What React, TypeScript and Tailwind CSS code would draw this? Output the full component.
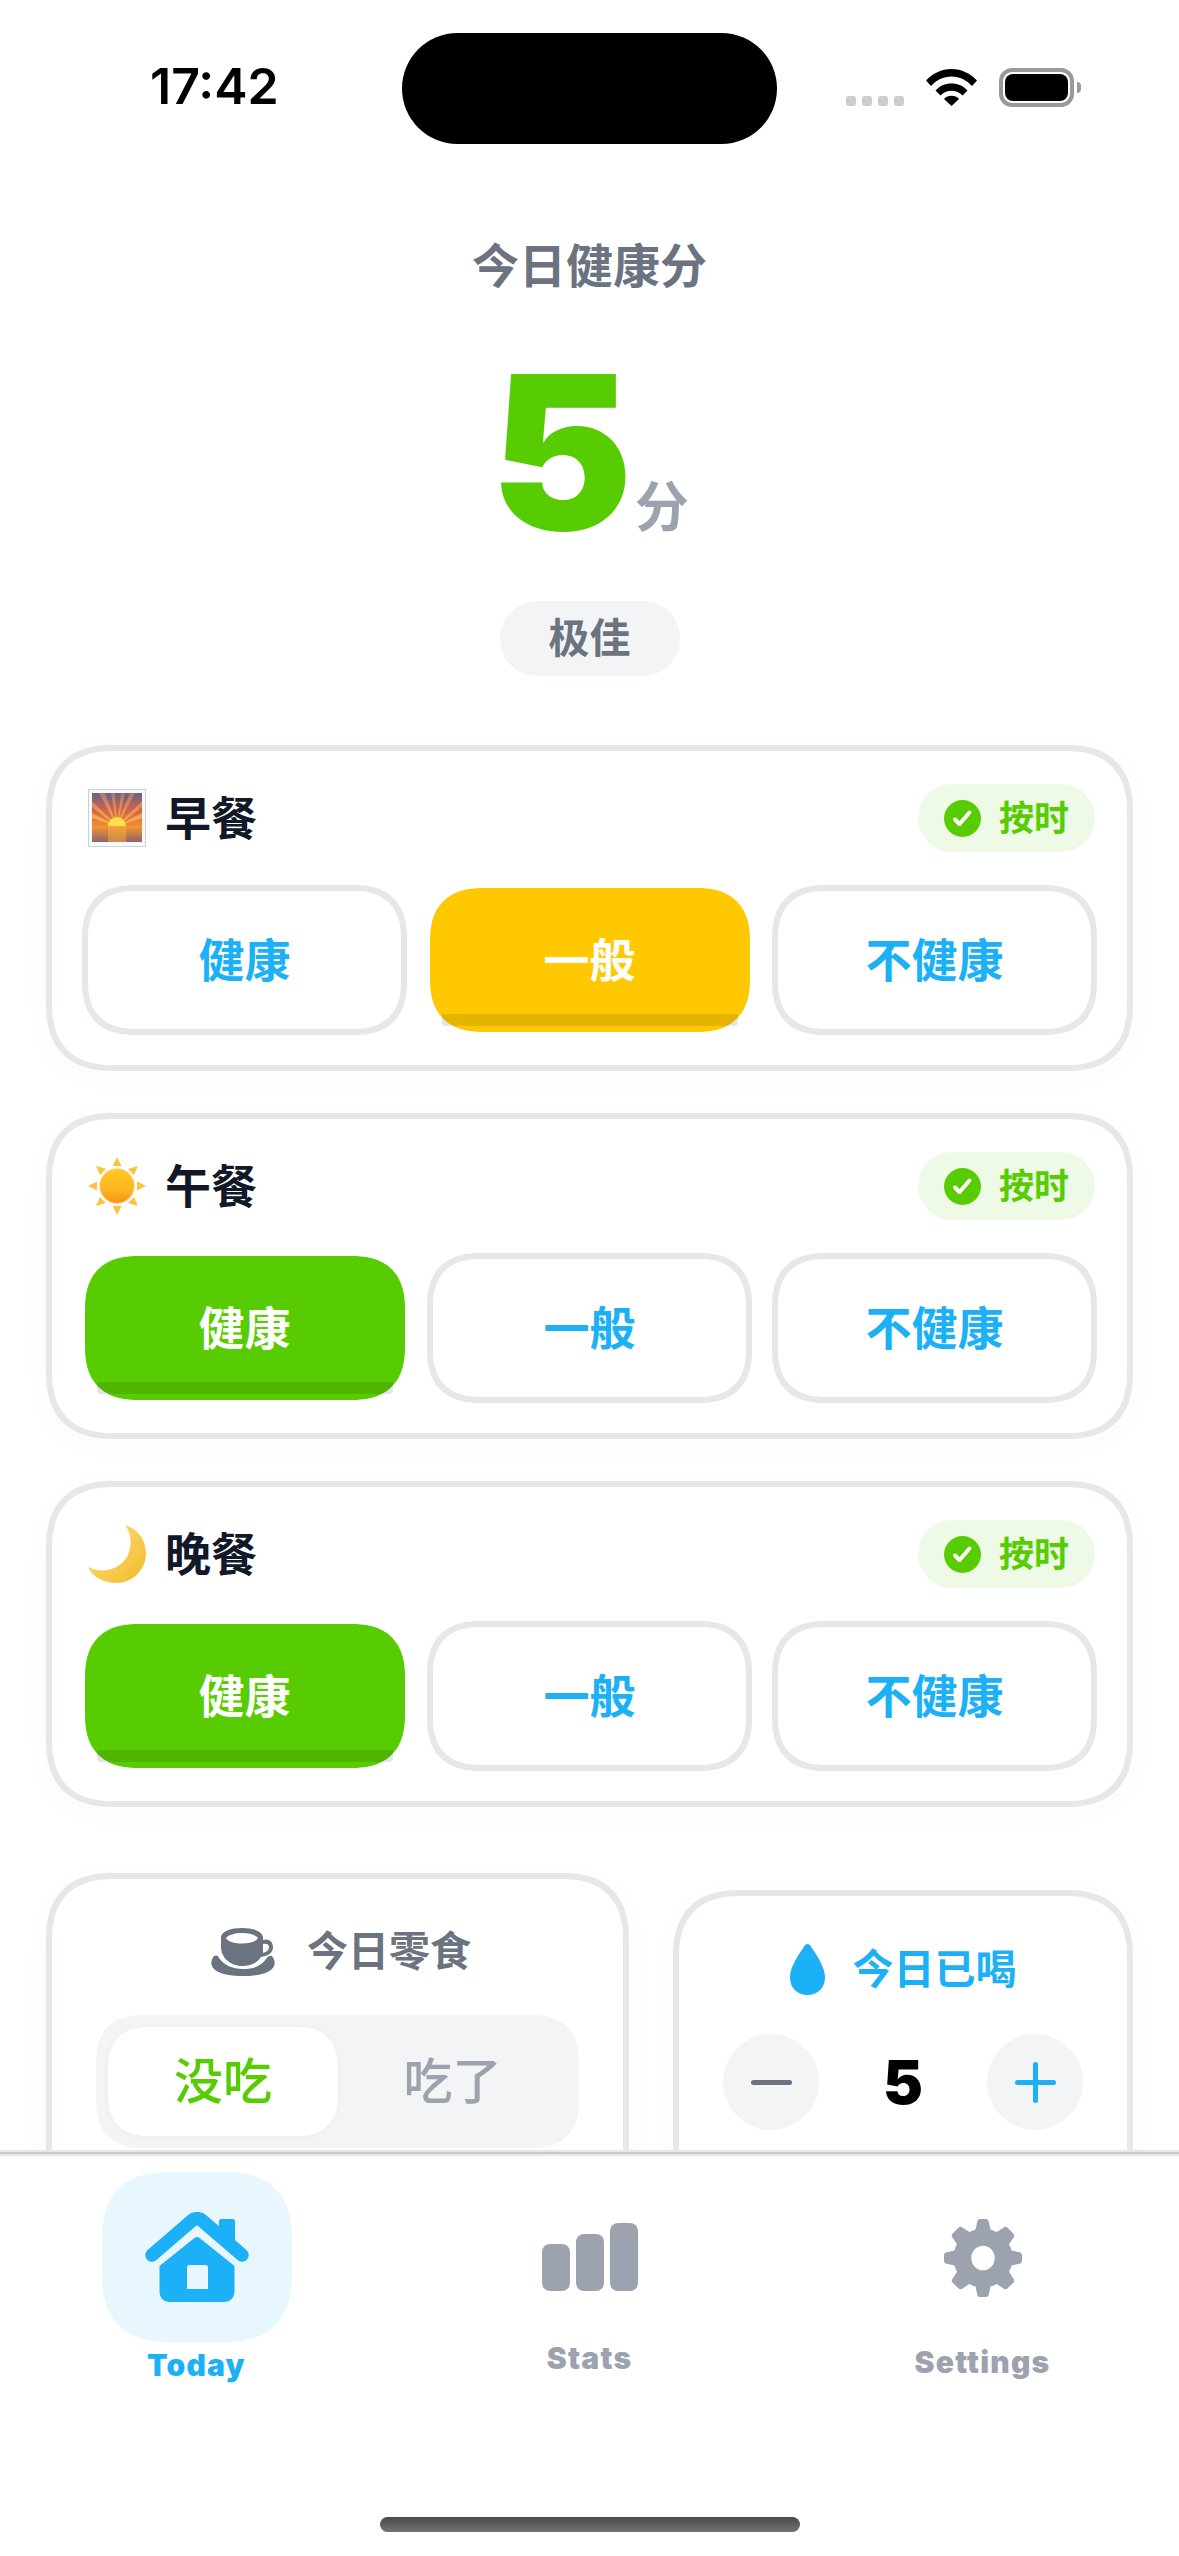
import { ReactNode } from "react";

const cjk = "font-['Inter','Noto_Sans_CJK_SC',sans-serif]";
const squircle = "[corner-shape:superellipse(1.3)]";

const Sunrise = () => (
  <svg width="58" height="58" viewBox="0 0 58 58" className="shrink-0">
    <defs>
      <linearGradient id="sky" x1="0" y1="0" x2="0" y2="1">
        <stop offset="0" stopColor="#67608a" />
        <stop offset="0.45" stopColor="#c9604f" />
        <stop offset="1" stopColor="#f98a2c" />
      </linearGradient>
      <linearGradient id="sea" x1="0" y1="0" x2="0" y2="1">
        <stop offset="0" stopColor="#f39a2e" />
        <stop offset="1" stopColor="#8f6268" />
      </linearGradient>
      <linearGradient id="ray" x1="0" y1="0" x2="0" y2="1">
        <stop offset="0" stopColor="#d08a68" stopOpacity="0.55" />
        <stop offset="1" stopColor="#ffbf55" stopOpacity="0.95" />
      </linearGradient>
    </defs>
    <rect x="0.5" y="0.5" width="57" height="57" fill="#f7fafa" stroke="#c9d3d3" />
    <rect x="4" y="4" width="50" height="33" fill="url(#sky)" />
    <path
      d="M29 37L4 12V18ZM29 37L4 24V29ZM29 37L11 4H17ZM29 37L23 4H27ZM29 37L33 4H37ZM29 37L42 4H47ZM29 37L54 12V18ZM29 37L54 24V29Z"
      fill="url(#ray)"
    />
    <path d="M20 37a9 9 0 0 1 18 0z" fill="#ffe04d" />
    <rect x="4" y="37" width="50" height="16" fill="url(#sea)" />
    <rect x="20" y="37" width="18" height="16" fill="#f7a83a" opacity="0.55" />
  </svg>
);

const Sun = () => (
  <svg width="58" height="58" viewBox="0 0 58 58" className="shrink-0">
    <defs>
      <linearGradient id="sunfill" x1="0" y1="0" x2="0" y2="1">
        <stop offset="0" stopColor="#ffc928" />
        <stop offset="0.6" stopColor="#fdb51e" />
        <stop offset="1" stopColor="#f7941a" />
      </linearGradient>
    </defs>
    <path
      d="M29 0l4.500 9h-9zM29 58l4.500-9h-9zM0 29l9 4.500v-9zM58 29l-9 4.500v-9zM8 9l10 3-6 6zM50 9l-10 3 6 6zM8 49l10-3-6-6zM50 49l-10-3 6-6z"
      fill="#fcc23f"
    />
    <circle cx="29" cy="29" r="18" fill="#fde4b0" />
    <circle cx="29" cy="29" r="17" fill="url(#sunfill)" />
  </svg>
);

const Moon = () => (
  <svg width="58" height="58" viewBox="0 0 58 58" className="shrink-0">
    <defs>
      <linearGradient id="moonfill" x1="0" y1="0" x2="1" y2="1">
        <stop offset="0" stopColor="#ffe27a" />
        <stop offset="1" stopColor="#f2b92e" />
      </linearGradient>
    </defs>
    <path d="M37 0C52 4 61 20 57 36 53 50 40 59 26 58 13 57 3 50 0 42 14 49 31 45 39 32 44 22 44 9 37 0Z" fill="url(#moonfill)" />
  </svg>
);

const Cup = () => (
  <svg width="66" height="50" viewBox="0 0 66 50" className="shrink-0">
    <path d="M4 29C-4 40 6 49 33 49 60 49 70 40 62 29 60 28 58 29 56 32 52 38 45 42 33 42 22 42 14 38 9 31 8 28 6 28 4 29Z" fill="#6b7280" />
    <path fillRule="evenodd" d="M11 11C11 4 21 1 32 1 43 1 53 4 53 11V13C58 11 63 14 63 20 63 26 58 29 51 30 48 35 42 39 32 39 20 39 11 30 11 20ZM16 11C18 8 25 6 32 6 39 6 46 8 48 11 46 15 39 16.500 32 16.500 25 16.500 18 15 16 11ZM53 17V26C57 25 59 23 59 20 59 17 56 16 53 17Z" fill="#6b7280" />
  </svg>
);

const Drop = () => (
  <svg width="35" height="51" viewBox="0 0 35 51" className="shrink-0">
    <path d="M17.500 0C15.600 0 14.800 1.400 13.800 3 8.500 11 0 22.500 0 33.500 0 44 7.500 51 17.500 51 27.500 51 35 44 35 33.500 35 22.500 26.500 11 21.200 3 20.200 1.400 19.400 0 17.500 0Z" fill="#1cb0f6" />
  </svg>
);

const Home = () => (
  <svg width="104" height="90" viewBox="0 0 104 90">
    <path d="M74 9C74 8 75 7 76 7H88C89 7 90 8 90 9V32L74 18Z" fill="#1cb0f6" />
    <path d="M7 43L47 8.500C50 6 54 6 57 8.500L97 43" fill="none" stroke="#1cb0f6" strokeWidth="13.500" strokeLinecap="round" strokeLinejoin="round" />
    <path fillRule="evenodd" d="M14.500 54L50 25.500C51 24.700 53 24.700 54 25.500L89.500 54V79C89.500 85.500 85.500 90 79 90H25C18.500 90 14.500 85.500 14.500 79ZM44 53C43 53 42 54 42 55V77H63V55C63 54 62 53 61 53Z" fill="#1cb0f6" />
  </svg>
);

const Stats = () => (
  <div className="flex h-[68px] items-end gap-[6px]">
    <div className="h-[47px] w-[28px] rounded-[8px] bg-[#9ca3af]" />
    <div className="h-[57px] w-[28px] rounded-[8px] bg-[#9ca3af]" />
    <div className="h-[68px] w-[28px] rounded-[8px] bg-[#9ca3af]" />
  </div>
);

const Gear = () => (
  <svg width="78" height="78" viewBox="0 0 24 24" fill="#9ca3af">
    <path
      fillRule="evenodd"
      d="M10.300 0.500C10.500 0.200 10.800 0 11.200 0H12.800C13.200 0 13.500 0.200 13.700 0.500L14.300 3.200C15 3.400 15.600 3.700 16.200 4L18.500 2.500C18.800 2.300 19.200 2.300 19.500 2.600L21.400 4.500C21.700 4.800 21.700 5.200 21.500 5.500L20 7.800C20.300 8.400 20.600 9 20.800 9.700L23.500 10.300C23.800 10.500 24 10.800 24 11.200V12.800C24 13.200 23.800 13.500 23.500 13.700L20.800 14.300C20.600 15 20.300 15.600 20 16.200L21.500 18.500C21.700 18.800 21.700 19.200 21.400 19.500L19.500 21.400C19.200 21.700 18.800 21.700 18.500 21.500L16.200 20C15.600 20.300 15 20.600 14.300 20.800L13.700 23.500C13.500 23.800 13.200 24 12.800 24H11.200C10.800 24 10.500 23.800 10.300 23.500L9.700 20.800C9 20.600 8.400 20.300 7.800 20L5.500 21.500C5.200 21.700 4.800 21.700 4.500 21.400L2.600 19.500C2.300 19.200 2.300 18.800 2.500 18.500L4 16.200C3.700 15.600 3.400 15 3.200 14.300L0.500 13.700C0.200 13.500 0 13.200 0 12.800V11.200C0 10.800 0.200 10.500 0.500 10.300L3.200 9.700C3.400 9 3.700 8.400 4 7.800L2.500 5.500C2.300 5.200 2.300 4.800 2.600 4.500L4.500 2.600C4.800 2.300 5.200 2.300 5.500 2.500L7.800 4C8.400 3.700 9 3.400 9.700 3.200ZM12 8.200A3.600 3.800 0 1 0 12 15.800 3.600 3.800 0 1 0 12 8.200Z"
    />
  </svg>
);

const Wifi = () => (
  <svg width="51" height="37" viewBox="0 0 51 37" fill="#000">
    <path d="M0 11.500C6.500 4.500 15.500 0 25.500 0 35.500 0 44.500 4.500 51 11.500L46 17C40.800 11.200 33.500 7.500 25.500 7.500 17.500 7.500 10.200 11.200 5 17Z" />
    <path d="M9.500 21.500C13.500 17 19.200 14.500 25.500 14.500 31.800 14.500 37.500 17 41.500 21.500L36.500 26.500C33.700 23.500 29.800 21.800 25.500 21.800 21.200 21.800 17.300 23.500 14.500 26.500Z" />
    <path d="M18 30C20 28 22.500 26.800 25.500 26.800 28.500 26.800 31 28 33 30L25.500 37Z" />
  </svg>
);

const Check = () => (
  <svg width="37" height="37" viewBox="0 0 37 37" className="shrink-0">
    <circle cx="18.500" cy="18.500" r="18.500" fill="#58cc02" />
    <path d="M11 19.500L15.500 24 25.500 12.500" fill="none" stroke="#fff" strokeWidth="4" strokeLinecap="round" strokeLinejoin="round" />
  </svg>
);

type Pick = "good" | "okay" | "none";

const Option = ({ label, active }: { label: string; active?: "green" | "yellow" }) => {
  if (active) {
    return (
      <div className="flex h-[150px] items-center justify-center">
        <div
          className={`relative flex h-[144px] w-[320px] items-center justify-center rounded-[54px] text-[46px] font-bold text-white ${squircle} ${
            active === "green" ? "bg-[#58cc02]" : "bg-[#ffc800]"
          }`}
        >
          {label}
          <div className="absolute right-[12px] bottom-[6px] left-[12px] h-[12px] rounded-b-[4px] bg-black/10" />
        </div>
      </div>
    );
  }
  return (
    <div className={`flex h-[150px] items-center justify-center rounded-[54px] border-[6px] border-[#e5e7eb] bg-white text-[46px] font-bold text-[#1cb0f6] ${squircle}`}>
      {label}
    </div>
  );
};

const MealCard = ({ icon, title, pick }: { icon: ReactNode; title: string; pick: Pick }) => (
  <div className={`rounded-[68px] border-[6px] border-[#e5e7eb] bg-white px-[30px] pt-[33px] pb-[30px] shadow-[0_6px_36px_rgba(0,0,0,0.02)] ${squircle}`}>
    <div className="mb-[33px] flex h-[68px] items-center justify-between pr-[2px]">
      <div className="flex items-center gap-[19px] pl-[6px]">
        {icon}
        <span className="text-[46px] leading-none font-bold text-[#111827]">{title}</span>
      </div>
      <div className="flex h-[68px] items-center gap-[18px] rounded-full bg-[#eefae6] pr-[26px] pl-[26px] text-[35px] font-bold text-[#58cc02]">
        <Check />
        按时
      </div>
    </div>
    <div className="grid grid-cols-3 gap-[20px]">
      <Option label="健康" active={pick === "good" ? "green" : undefined} />
      <Option label="一般" active={pick === "okay" ? "yellow" : undefined} />
      <Option label="不健康" />
    </div>
  </div>
);

export default function App() {
  return (
    <div className={`flex h-[2556px] w-[1179px] flex-col overflow-hidden bg-white ${cjk}`}>
      <div className="flex min-h-0 flex-1 flex-col overflow-hidden">
        {/* status bar */}
        <div className="relative h-[144px] shrink-0">
          <span className="absolute top-[56px] left-[150px] text-[50px] leading-[60px] font-semibold text-black">17:42</span>
          <div className="absolute top-[33px] left-[402px] h-[111px] w-[375px] rounded-full bg-black" />
          <div className="absolute top-[96px] left-[846px] flex gap-[6px]">
            <div className="size-[10px] rounded-[3px] bg-[#cccccc]" />
            <div className="size-[10px] rounded-[3px] bg-[#cccccc]" />
            <div className="size-[10px] rounded-[3px] bg-[#cccccc]" />
            <div className="size-[10px] rounded-[3px] bg-[#cccccc]" />
          </div>
          <div className="absolute top-[69px] left-[926px]">
            <Wifi />
          </div>
          <div className="absolute top-[68px] left-[999px] h-[39px] w-[75px] rounded-[13px] border-[4px] border-[#999999] p-[2px]">
            <div className="h-full w-full rounded-[8px] bg-black" />
          </div>
          <div className="absolute top-[82px] left-[1077px] h-[11px] w-[4px] rounded-r-full bg-[#999999]" />
        </div>

        {/* score */}
        <div className="flex shrink-0 flex-col items-center">
          <div className="mt-[95px] text-[47px] leading-[54px] font-bold text-[#6b7280]">今日健康分</div>
          <div className="mt-[60px] flex h-[200px] items-end">
            <span className="text-[214px] leading-[200px] font-black text-[#58cc02]">5</span>
            <span className="mb-[13px] ml-[2px] text-[54px] leading-[64px] font-bold text-[#9ca3af]">分</span>
          </div>
          <div className="mt-[48px] flex h-[75px] w-[180px] items-center justify-center rounded-[37px] bg-[#f3f4f6] text-[41px] font-bold text-[#6b7280]">
            极佳
          </div>
        </div>

        {/* meals */}
        <div className="mt-[69px] flex shrink-0 flex-col gap-[42px] px-[46px]">
          <MealCard icon={<Sunrise />} title="早餐" pick="okay" />
          <MealCard icon={<Sun />} title="午餐" pick="good" />
          <MealCard icon={<Moon />} title="晚餐" pick="good" />
        </div>

        {/* snack + water */}
        <div className="mt-[66px] flex items-start gap-[44px] px-[46px]">
          <div className={`h-[340px] w-[583px] shrink-0 rounded-[68px] border-[6px] border-[#e5e7eb] bg-white px-[44px] pt-[48px] shadow-[0_6px_36px_rgba(0,0,0,0.02)] ${squircle}`}>
            <div className="flex h-[50px] items-center justify-center gap-[31px] pl-[6px]">
              <Cup />
              <span className="text-[41px] font-bold text-[#6b7280]">今日零食</span>
            </div>
            <div className={`mt-[38px] flex h-[133px] rounded-[48px] bg-[#f3f4f6] p-[12px] ${squircle}`}>
              <div className={`flex w-[230px] items-center justify-center rounded-[42px] bg-white text-[49px] font-medium text-[#58cc02] shadow-[0_0_6px_rgba(0,0,0,0.04)] ${squircle}`}>
                没吃
              </div>
              <div className="flex flex-1 items-center justify-center text-[49px] font-medium text-[#9ca3af]">吃了</div>
            </div>
          </div>
          <div className={`mt-[17px] h-[340px] flex-1 rounded-[68px] border-[6px] border-[#e5e7eb] bg-white px-[44px] pt-[48px] shadow-[0_6px_36px_rgba(0,0,0,0.02)] ${squircle}`}>
            <div className="flex h-[51px] items-center justify-center gap-[28px]">
              <Drop />
              <span className="text-[41px] font-semibold text-[#1cb0f6]">今日已喝</span>
            </div>
            <div className="mt-[39px] flex items-center justify-between">
              <div className="flex size-[96px] items-center justify-center rounded-full bg-[#f3f4f6]">
                <div className="h-[5px] w-[41px] rounded-full bg-[#6b7280]" />
              </div>
              <span className="text-[60px] leading-none font-black text-black">5</span>
              <div className="relative flex size-[96px] items-center justify-center rounded-full bg-[#f3f4f6]">
                <div className="h-[5px] w-[41px] rounded-full bg-[#1cb0f6]" />
                <div className="absolute h-[41px] w-[5px] rounded-full bg-[#1cb0f6]" />
              </div>
            </div>
          </div>
        </div>
      </div>

      {/* tab bar */}
      <div className="relative h-[406px] shrink-0 border-t-[6px] border-[#e5e7eb] bg-white">
        <div className="absolute -top-[4px] right-0 left-0 h-[2px] bg-[#c8c8cc]" />
        <div className="grid grid-cols-3 text-[30px] leading-[36px] font-black tracking-[1.2px]">
          <div className="flex flex-col items-center pt-[16px] text-[#1cb0f6]">
            <div className={`flex h-[170px] w-[190px] items-center justify-center rounded-[68px] bg-[#e8f7fe] ${squircle}`}>
              <Home />
            </div>
            <span className="mt-[5px]">Today</span>
          </div>
          <div className="flex flex-col items-center pt-[67px] text-[#9ca3af]">
            <Stats />
            <span className="mt-[49px]">Stats</span>
          </div>
          <div className="flex flex-col items-center pt-[63px] text-[#9ca3af]">
            <Gear />
            <span className="mt-[47px]">Settings</span>
          </div>
        </div>
        <div className="absolute bottom-[24px] left-[380px] h-[15px] w-[420px] rounded-full bg-linear-to-b from-[#4a4a4a] to-[#737373]" />
      </div>
    </div>
  );
}
